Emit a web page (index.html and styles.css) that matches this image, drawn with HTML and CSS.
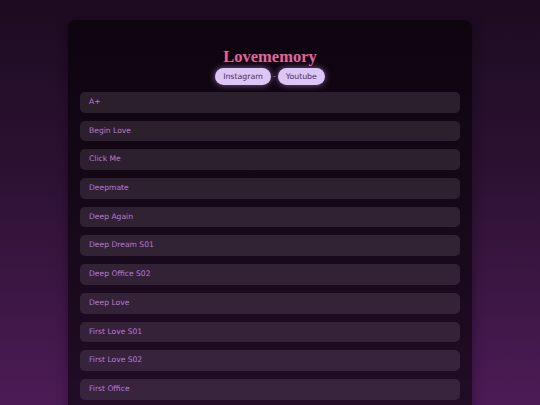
FILE: index.html
```html
<!DOCTYPE html>
<html lang="en">
<head>
<meta charset="utf-8">
<title>Lovememory</title>
<link rel="stylesheet" href="styles.css">
</head>
<body>
<main class="panel">
  <h1 class="title">Lovememory</h1>
  <nav class="links">
    <a class="pill" href="#">Instagram</a>
    <span class="sep">-</span>
    <a class="pill" href="#">Youtube</a>
  </nav>
  <ul class="list">
    <li class="item">A+</li>
    <li class="item">Begin Love</li>
    <li class="item">Click Me</li>
    <li class="item">Deepmate</li>
    <li class="item">Deep Again</li>
    <li class="item">Deep Dream S01</li>
    <li class="item">Deep Office S02</li>
    <li class="item">Deep Love</li>
    <li class="item">First Love S01</li>
    <li class="item">First Love S02</li>
    <li class="item">First Office</li>
  </ul>
</main>
</body>
</html>
```
FILE: styles.css
```css
html, body {
  margin: 0;
  padding: 0;
  height: 405px;
  overflow: hidden;
}
body {
  background: linear-gradient(180deg, #1d0b21 0%, #2d1233 45%, #4c1b56 100%);
  font-family: "DejaVu Sans", "Open Sans", sans-serif;
  padding-top: 20px;
  box-sizing: border-box;
}
.panel {
  width: 404px;
  margin: 0 auto;
  box-sizing: border-box;
  padding: 26px 12px 12px;
  border-radius: 8px;
  background: rgba(0, 0, 0, 0.55);
  box-shadow: 0 0 12px rgba(0, 0, 0, 0.35);
  min-height: 420px;
}
.title {
  margin: 0;
  text-align: center;
  font-family: "Liberation Serif", "DejaVu Serif", serif;
  font-weight: bold;
  font-size: 16.5px;
  line-height: 21px;
  color: #e4649e;
}
.links {
  display: flex;
  justify-content: center;
  align-items: center;
  gap: 1px;
  margin-top: 1px;
}
.pill {
  display: block;
  height: 17px;
  line-height: 17px;
  padding: 0 8px;
  border-radius: 9px;
  background: #dcc6f3;
  color: #4b2a69;
  font-size: 7.8px;
  text-decoration: none;
  box-shadow: 0 0 6px rgba(200, 150, 240, 0.6);
}
.sep {
  color: #8a6a9a;
  font-size: 8px;
  padding: 0 1px;
}
.list {
  list-style: none;
  margin: 7px 0 0;
  padding: 0;
  display: flex;
  flex-direction: column;
  gap: 8px;
}
.item {
  height: 20.7px;
  line-height: 20.7px;
  padding: 0 9px;
  border-radius: 5px;
  background: rgba(255, 235, 255, 0.11);
  color: #bb78da;
  font-size: 7.6px;
}
```
